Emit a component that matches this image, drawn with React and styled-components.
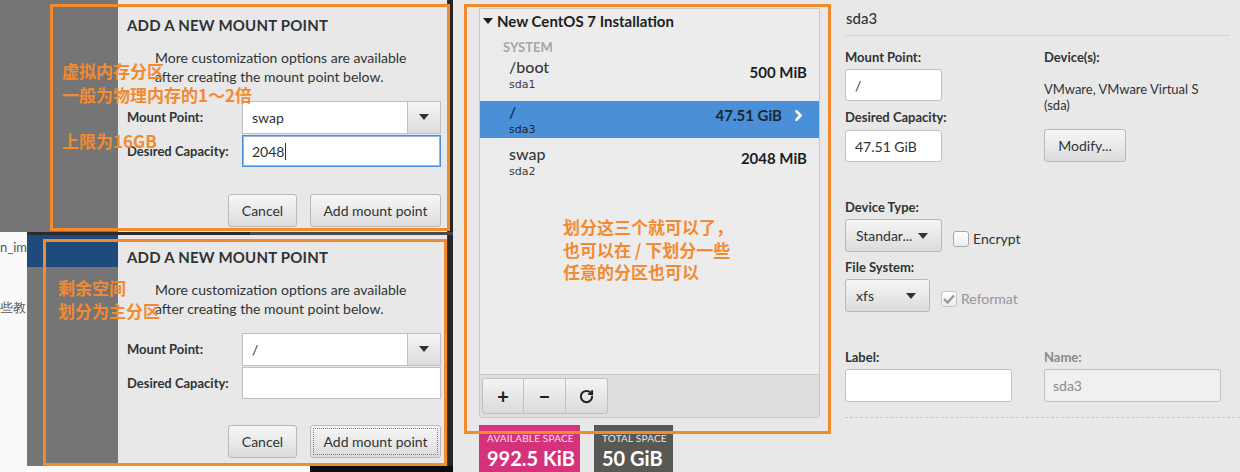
import React from 'react';
import styled, { createGlobalStyle } from 'styled-components';
import { RotateCw, ChevronRight } from 'lucide-react';

const ORANGE = '#f38a30';
const UI = `Lato, "Noto Sans", "Liberation Sans", sans-serif`;
const CJK = `"Noto Sans CJK SC", sans-serif`;

const GlobalStyle = createGlobalStyle`
  body {
    margin: 0;
    background: #e8e8e8;
    font-family: ${UI};
    color: #2e3436;
  }
  * { box-sizing: border-box; }
`;

const Page = styled.div`
  display: flex;
  width: 1240px;
  height: 472px;
  overflow: hidden;
  background: #e8e8e8;
`;

/* ---------- left: two dialog shots ---------- */

const LeftCol = styled.div`
  width: 453px;
  flex-shrink: 0;
  display: flex;
  flex-direction: column;
  background: #101010;
`;

const Shot = styled.div`
  position: relative;
  height: ${p => p.h}px;
  flex-shrink: 0;
  display: flex;
`;

const PageEdge = styled.div`
  width: 27px;
  background: #fafafa;
  overflow: hidden;
  white-space: nowrap;
  font-size: 13px;
  color: #555;
  display: flex;
  flex-direction: column;
  padding-top: 4px;
  gap: 44px;
`;

const Sidebar = styled.div`
  width: ${p => p.w}px;
  background: #757575;
  display: flex;
  flex-direction: column;
`;

const SidebarTop = styled.div`
  height: 32px;
  background: #1f4a7c;
`;

const DialogBody = styled.div`
  width: 329px;
  background: #e8e8e8;
  padding: ${p => p.top}px 6px 0 9px;
  display: flex;
  flex-direction: column;
`;

const DarkEdge = styled.div`
  flex: 1;
  background: #262626;
  border-left: 1px solid #3c3c3c;
`;

const DialogTitle = styled.div`
  font-size: 15px;
  line-height: 18px;
  font-weight: 700;
  letter-spacing: 0.2px;
`;

const DialogText = styled.div`
  margin: 14px 0 0 28px;
  font-size: 14px;
  line-height: 19px;
  color: #2e3436;
`;

const FormGrid = styled.div`
  margin-top: 15px;
  display: grid;
  grid-template-columns: 115px 199px;
  grid-auto-rows: 32px;
  row-gap: 2px;
  align-items: center;
`;

const FieldLabel = styled.div`
  font-size: 13px;
  font-weight: 700;
  color: ${p => (p.muted ? '#8a8a8a' : '#2e3436')};
  line-height: 16px;
`;

const Combo = styled.div`
  display: flex;
  height: 33px;
`;

const Entry = styled.div`
  flex: ${p => (p.w ? 'none' : 1)};
  height: ${p => p.h || 32}px;
  width: ${p => (p.w ? `${p.w}px` : 'auto')};
  background: ${p => (p.disabled ? '#f0f0f0' : '#fff')};
  border: 1px solid ${p => (p.focus ? '#4a90d9' : '#c0c0c0')};
  box-shadow: ${p => (p.focus ? 'inset 0 0 0 1px #8fb8e6' : 'none')};
  border-radius: ${p => (p.round ? '3px' : '0')};
  display: flex;
  align-items: center;
  padding-left: ${p => p.pl || 9}px;
  font-size: 14px;
  color: ${p => (p.disabled ? '#8a8a8a' : '#2e3436')};
`;

const Caret = styled.span`
  display: inline-block;
  width: 1px;
  height: 17px;
  background: #2e3436;
  margin-left: 1px;
`;

const ComboButton = styled.div`
  width: 33px;
  border: 1px solid #c0c0c0;
  border-left: none;
  background: linear-gradient(#f5f5f5, #dcdcdc);
  display: flex;
  align-items: center;
  justify-content: center;
`;

const ButtonRow = styled.div`
  display: flex;
  justify-content: flex-end;
  gap: 13px;
  margin-top: ${p => p.mt}px;
`;

const GtkButton = styled.div`
  width: ${p => p.w}px;
  height: 33px;
  border: 1px solid #b8b8b8;
  border-radius: 3px;
  background: linear-gradient(#f7f7f7, #dcdcdc);
  display: flex;
  align-items: center;
  justify-content: center;
  font-size: 14px;
  color: #2e3436;
  outline: ${p => (p.focused ? '1px dotted #777' : 'none')};
  outline-offset: -4px;
`;

const Seam = styled.div`
  height: 3px;
  flex-shrink: 0;
  display: flex;
`;

const SeamPart = styled.div`
  width: ${p => (p.w ? `${p.w}px` : 'auto')};
  flex: ${p => (p.w ? 'none' : 1)};
  background: ${p => p.bg};
`;

const Frame = styled.div`
  position: absolute;
  left: ${p => p.x}px;
  top: ${p => p.y}px;
  width: ${p => p.w}px;
  height: ${p => p.h}px;
  border: 3px solid ${ORANGE};
  pointer-events: none;
`;

const Note = styled.div`
  position: absolute;
  left: ${p => p.x}px;
  top: ${p => p.y}px;
  font-family: ${CJK};
  font-weight: 700;
  font-size: 17px;
  line-height: ${p => p.lh || 24}px;
  color: ${ORANGE};
  white-space: nowrap;
`;

const DownTri = ({ color = '#2e3436' }) => (
  <svg width="10" height="6" viewBox="0 0 10 6">
    <polygon points="0,0 10,0 5,6" fill={color} />
  </svg>
);

const MountDialog = ({ top, point, capacity, focusCap, btnMt }) => (
  <DialogBody top={top}>
    <DialogTitle>ADD A NEW MOUNT POINT</DialogTitle>
    <DialogText>
      More customization options are available
      <br />
      after creating the mount point below.
    </DialogText>
    <FormGrid>
      <FieldLabel>Mount Point:</FieldLabel>
      <Combo>
        <Entry h={33}>{point}</Entry>
        <ComboButton>
          <DownTri />
        </ComboButton>
      </Combo>
      <FieldLabel>Desired Capacity:</FieldLabel>
      <Entry focus={focusCap}>
        {capacity}
        {focusCap && <Caret />}
      </Entry>
    </FormGrid>
    <ButtonRow mt={btnMt}>
      <GtkButton w={69}>Cancel</GtkButton>
      <GtkButton w={131} focused={!focusCap}>Add mount point</GtkButton>
    </ButtonRow>
  </DialogBody>
);

const BottomStrip = styled.div`
  height: 6px;
  flex-shrink: 0;
  display: flex;
`;

/* ---------- middle: partition list ---------- */

const MiddleCol = styled.div`
  position: relative;
  width: 378px;
  flex-shrink: 0;
  padding: 8px 0 0 26px;
  display: flex;
  flex-direction: column;
`;

const ListPanel = styled.div`
  width: 341px;
  height: 410px;
  flex-shrink: 0;
  border: 1px solid #c7c9c2;
  border-radius: 0 0 3px 3px;
  background: #ececec;
  display: flex;
  flex-direction: column;
`;

const ListBody = styled.div`
  flex: 1;
  padding-top: 2px;
`;

const GroupHeader = styled.div`
  display: flex;
  align-items: center;
  gap: 4px;
  padding-left: 3px;
  font-size: 15px;
  font-weight: 700;
  line-height: 20px;
  color: #1d1d1d;
`;

const SectionTag = styled.div`
  margin: 8px 0 0 23px;
  font-size: 13px;
  font-weight: 700;
  color: #a6a6a6;
  line-height: 16px;
`;

const PartRow = styled.div`
  display: flex;
  justify-content: space-between;
  align-items: flex-start;
  padding: ${p => p.pt}px 12px 0 29px;
  height: ${p => p.h}px;
  background: ${p => (p.selected ? '#4a90d9' : 'transparent')};
  color: ${p => (p.selected ? '#1b2633' : '#3a3a3a')};
`;

const PartName = styled.div`
  font-size: 16px;
  line-height: 19px;
  font-weight: 500;
`;

const PartDev = styled.div`
  font-size: 11px;
  line-height: 14px;
  margin-top: 2px;
  font-family: "DejaVu Sans", sans-serif;
`;

const PartSize = styled.div`
  display: flex;
  align-items: center;
  gap: 8px;
  margin-top: ${p => p.mt}px;
  font-size: 15px;
  font-weight: 700;
  color: ${p => (p.selected ? '#1b2633' : '#1d1d1d')};
`;

const Toolbar = styled.div`
  height: 43px;
  border-top: 1px solid #c7c9c2;
  background: #dedede;
  padding: 3px 0 0 2px;
  display: flex;
`;

const ToolButton = styled.div`
  width: 42px;
  height: 36px;
  border: 1px solid #c0c0c0;
  border-left: ${p => (p.first ? '1px solid #c0c0c0' : 'none')};
  border-radius: ${p => (p.first ? '3px 0 0 3px' : p.last ? '0 3px 3px 0' : '0')};
  background: linear-gradient(#f4f4f4, #dadada);
  display: flex;
  align-items: center;
  justify-content: center;
  font-size: 20px;
  font-weight: 700;
  color: #222;
`;

const Badges = styled.div`
  display: flex;
  gap: 14px;
  margin-top: 7px;
  flex-shrink: 0;
`;

const Badge = styled.div`
  width: ${p => p.w}px;
  height: 60px;
  background: ${p => p.bg};
  padding: 7px 0 0 8px;
  color: #fff;
`;

const BadgeLabel = styled.div`
  font-size: 10px;
  line-height: 13px;
  opacity: 0.85;
  letter-spacing: 0.2px;
`;

const BadgeValue = styled.div`
  font-size: 20px;
  line-height: 26px;
  font-weight: 700;
`;

/* ---------- right: details ---------- */

const RightCol = styled.div`
  flex: 1;
  padding: 9px 0 0 14px;
  display: flex;
  flex-direction: column;
`;

const DetailTitle = styled.div`
  font-size: 15px;
  line-height: 18px;
  font-weight: 500;
  color: #2e3436;
  padding-left: 1px;
`;

const Rule = styled.div`
  margin: 8px 10px 0 0;
  border-top: 1px solid #d2d2d2;
`;

const DetailGrid = styled.div`
  display: grid;
  grid-template-columns: 199px 1fr;
  margin-top: ${p => p.mt}px;
`;

const Stack = styled.div`
  display: flex;
  flex-direction: column;
  align-items: flex-start;
`;

const Gap = styled.div`
  height: ${p => p.h}px;
  flex-shrink: 0;
`;

const DeviceText = styled.div`
  font-size: 13px;
  line-height: 16px;
  color: #2e3436;
`;

const InlineRow = styled.div`
  display: flex;
  align-items: center;
  gap: 11px;
`;

const Dropdown = styled.div`
  width: ${p => p.w}px;
  height: 33px;
  border: 1px solid #b8b8b8;
  border-radius: 3px;
  background: linear-gradient(#f5f5f5, #dcdcdc);
  display: flex;
  align-items: center;
  justify-content: space-between;
  padding: 0 13px 0 10px;
  font-size: 14px;
  color: #2e3436;
`;

const Check = styled.div`
  display: flex;
  align-items: center;
  gap: 4px;
  font-size: 14px;
  color: ${p => (p.disabled ? '#959595' : '#2e3436')};
  margin-top: ${p => p.mt}px;
`;

const CheckBox = styled.div`
  width: 16px;
  height: 16px;
  border: 1px solid ${p => (p.disabled ? '#c4c4c4' : '#a8a8a8')};
  border-radius: 3px;
  background: linear-gradient(#fff, #ececec);
  display: flex;
  align-items: center;
  justify-content: center;
`;

const DashedRule = styled.div`
  margin-top: 15px;
  border-top: 1px dashed #c8c8c8;
`;

const CheckMark = () => (
  <svg width="12" height="10" viewBox="0 0 12 10">
    <path d="M1 5 L4.5 8.5 L11 1.5" fill="none" stroke="#9a9a9a" strokeWidth="2.4" />
  </svg>
);

export default function App() {
  return (
    <>
      <GlobalStyle />
      <Page>
        <LeftCol>
          <Shot h={232}>
            <Sidebar w={118} />
            <MountDialog top={16} point="swap" capacity="2048" focusCap btnMt={27} />
            <DarkEdge />
            <Frame x={50} y={4} w={400} h={227} />
            <Note x={62} y={59}>
              虚拟内存分区
              <br />
              一般为物理内存的1～2倍
            </Note>
            <Note x={62} y={129}>上限为16GB</Note>
          </Shot>
          <Seam>
            <SeamPart w={27} bg="#fafafa" />
            <SeamPart w={223} bg="#2b2b2b" />
            <SeamPart bg="#4a4a4a" />
          </Seam>
          <Shot h={231}>
            <PageEdge>
              <span>n_im</span>
              <span>些教</span>
            </PageEdge>
            <Sidebar w={91}>
              <SidebarTop />
            </Sidebar>
            <MountDialog top={13} point="/" capacity="" btnMt={26} />
            <DarkEdge />
            <Frame x={43} y={4} w={404} h={227} />
            <Note x={58} y={41} lh={23}>
              剩余空间
              <br />
              划分为主分区
            </Note>
          </Shot>
          <BottomStrip>
            <SeamPart w={310} bg="#fafafa" />
            <SeamPart bg="#0c0c0c" />
          </BottomStrip>
        </LeftCol>

        <MiddleCol>
          <ListPanel>
            <ListBody>
              <GroupHeader>
                <DownTri color="#1d1d1d" />
                New CentOS 7 Installation
              </GroupHeader>
              <SectionTag>SYSTEM</SectionTag>
              <PartRow pt={2} h={46}>
                <div>
                  <PartName>/boot</PartName>
                  <PartDev>sda1</PartDev>
                </div>
                <PartSize mt={6}>500 MiB</PartSize>
              </PartRow>
              <PartRow selected pt={1} h={37}>
                <div>
                  <PartName>/</PartName>
                  <PartDev>sda3</PartDev>
                </div>
                <PartSize selected mt={4}>
                  47.51 GiB
                  <ChevronRight size={17} color="#fff" strokeWidth={3.5} />
                </PartSize>
              </PartRow>
              <PartRow pt={6} h={44}>
                <div>
                  <PartName>swap</PartName>
                  <PartDev>sda2</PartDev>
                </div>
                <PartSize mt={5}>2048 MiB</PartSize>
              </PartRow>
            </ListBody>
            <Toolbar>
              <ToolButton first>+</ToolButton>
              <ToolButton>−</ToolButton>
              <ToolButton last>
                <RotateCw size={15} strokeWidth={3.2} color="#222" />
              </ToolButton>
            </Toolbar>
          </ListPanel>
          <Badges>
            <Badge w={101} bg="#d6327c">
              <BadgeLabel>AVAILABLE SPACE</BadgeLabel>
              <BadgeValue>992.5 KiB</BadgeValue>
            </Badge>
            <Badge w={79} bg="#585854">
              <BadgeLabel>TOTAL SPACE</BadgeLabel>
              <BadgeValue>50 GiB</BadgeValue>
            </Badge>
          </Badges>
          <Frame x={11} y={4} w={367} h={430} />
          <Note x={110} y={216} lh={22.5}>
            划分这三个就可以了，
            <br />
            也可以在 / 下划分一些
            <br />
            任意的分区也可以
          </Note>
        </MiddleCol>

        <RightCol>
          <DetailTitle>sda3</DetailTitle>
          <Rule />
          <DetailGrid mt={13}>
            <Stack>
              <FieldLabel>Mount Point:</FieldLabel>
              <Gap h={4} />
              <Entry w={97} round>/</Entry>
              <Gap h={8} />
              <FieldLabel>Desired Capacity:</FieldLabel>
              <Gap h={5} />
              <Entry w={97} round>47.51 GiB</Entry>
            </Stack>
            <Stack>
              <FieldLabel>Device(s):</FieldLabel>
              <Gap h={16} />
              <DeviceText>
                VMware, VMware Virtual S
                <br />
                (sda)
              </DeviceText>
              <Gap h={16} />
              <GtkButton w={82}>Modify...</GtkButton>
            </Stack>
          </DetailGrid>
          <Gap h={37} />
          <FieldLabel>Device Type:</FieldLabel>
          <Gap h={4} />
          <InlineRow>
            <Dropdown w={97}>
              Standar...
              <DownTri />
            </Dropdown>
            <Check mt={6}>
              <CheckBox />
              Encrypt
            </Check>
          </InlineRow>
          <Gap h={7} />
          <FieldLabel>File System:</FieldLabel>
          <Gap h={4} />
          <InlineRow>
            <Dropdown w={85}>
              xfs
              <DownTri />
            </Dropdown>
            <Check disabled mt={6}>
              <CheckBox disabled>
                <CheckMark />
              </CheckBox>
              Reformat
            </Check>
          </InlineRow>
          <DetailGrid mt={37}>
            <Stack>
              <FieldLabel>Label:</FieldLabel>
              <Gap h={4} />
              <Entry w={167} h={33} round />
            </Stack>
            <Stack>
              <FieldLabel muted>Name:</FieldLabel>
              <Gap h={4} />
              <Entry w={177} h={33} round disabled pl={8}>sda3</Entry>
            </Stack>
          </DetailGrid>
          <DashedRule />
        </RightCol>
      </Page>
    </>
  );
}
